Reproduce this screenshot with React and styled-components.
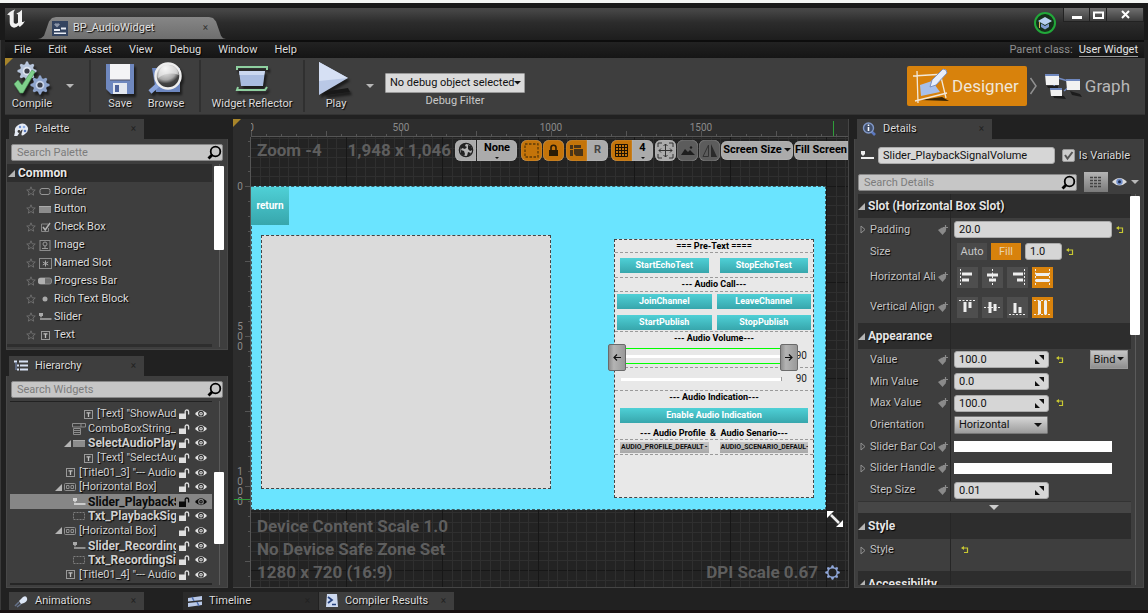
import React from "react";
import styled, { createGlobalStyle, css } from "styled-components";

const Global = createGlobalStyle`
  *, *::before, *::after { box-sizing: border-box; }
  html, body { margin: 0; background: #f4f6f4; }
  body, button, input, select { font-family: Roboto, "Liberation Sans", sans-serif; font-size: 11px; line-height: 14px; color: #dcdcdc; }
  button { border: 0; padding: 0; margin: 0; background: none; cursor: pointer; }
  input, select { margin: 0; min-width: 0; }
  ul { margin: 0; padding: 0; list-style: none; }
  svg { display: block; flex: none; }
`;

const panel = "#3e3e3e";
const label = css`text-shadow: 1px 1px 1px #000;`;

/* ---------- window frame ---------- */
const Window = styled.div`
  height: 100vh;
  min-height: 600px;
  display: flex;
  flex-direction: column;
  overflow: hidden;
  background: #212121;
  border-top: 3px solid #f4f6f4;
  box-shadow: inset 1px 0 #3a3a3a;
`;
const TitleBar = styled.header`
  height: 37px;
  flex: none;
  display: flex;
  align-items: flex-start;
  padding-left: 2px;
  border: solid #1a1a1a;
  border-width: 5px 4px 0 5px;
  background: linear-gradient(#4a4a4a, #2c2c2c 45%, #1d1d1d);
`;
const Logo = styled.div`width: 31px; padding-top: 1px;`;
const DocTab = styled.button`
  width: 188px;
  height: 22px;
  margin-top: 9px;
  padding: 0 18px 0 14px;
  display: flex;
  align-items: center;
  gap: 5px;
  color: #e2e2e2;
  background: linear-gradient(#868686, #6e6e6e);
  clip-path: polygon(0 100%, 3px 97%, 6px 85%, 11px 20%, 14px 5%, 18px 0, 171px 0, 175px 5%, 178px 20%, 183px 85%, 185px 97%, 100% 100%);
  ${label}
`;
const Close = styled.span`
  margin-left: auto;
  font-size: 10px;
  color: ${(p) => (p.$dim ? "#222" : "#333")};
  text-shadow: none;
`;
const TitleRight = styled.div`margin-left: auto; display: flex; gap: 7px;`;
const Tutorial = styled.button`
  width: 22px; height: 22px; margin-top: 4px; border-radius: 50%;
  border: 2px solid #22a83a; background: #16301b; display: grid; place-items: center;
`;
const WinButtons = styled.div`
  display: flex; gap: 1px; height: 14px; background: #222; border: 1px solid #222; border-top: 0;
`;
const WinButton = styled.button`
  width: ${(p) => p.$w}px; display: grid; place-items: center;
  background: linear-gradient(#707070, #3c3c3c);
`;
const MenuBar = styled.nav`
  height: 18px; flex: none; display: flex; align-items: center;
  margin: 0 4px 0 5px; padding: 0 6px 0 1px;
  border-top: 2px solid #0d0d0d;
  background: linear-gradient(#222, #151515);
`;
const MenuItem = styled.button`padding: 0 9px 0 8px; ${label}`;
const Parent = styled.div`
  margin-left: auto; color: #8f8f8f; display: flex; gap: 6px;
  a { color: #e4e4e4; text-decoration: none; border-bottom: 1px solid #999; line-height: 13px; }
`;

/* ---------- main toolbar ---------- */
const Toolbar = styled.div`
  height: 57px; flex: none; display: flex; margin: 0 3px 0 5px; padding-right: 15px;
  background: ${panel}; position: relative; border-bottom: 1px solid #333;
`;
const Corner = styled.i`
  position: absolute; left: 0; top: 0;
  border-top: 8px solid #a8852a; border-right: 8px solid transparent;
`;
const Tool = styled.button`
  width: ${(p) => p.$w}px; display: flex; flex-direction: column; align-items: center;
  padding-top: 3px; gap: 1px; white-space: nowrap; ${label}
  svg { filter: drop-shadow(2px 3px 1px rgba(0,0,0,.55)); }
`;
const Drop = styled.button`width: 22px; display: grid; place-items: center;`;
const Sep = styled.i`width: 2px; margin: 2px 8px; background: #303030;`;
const DebugBox = styled.div`
  width: 140px; margin-left: 4px; padding-top: 15px; display: flex; flex-direction: column;
  align-items: center; gap: 1px; color: #c8c8c8;
`;
const SelectWrap = styled.div`
  position: relative; width: ${(p) => (p.$w ? p.$w + "px" : "100%")};
  select {
    appearance: none; width: 100%; height: ${(p) => p.$h}px; padding: 0 4px;
    border: 1px solid ${(p) => (p.$grad ? "#777" : "#999")}; border-radius: 1px;
    color: #111; background: ${(p) => (p.$grad ? "linear-gradient(#d6d6d6, #9c9c9c)" : "#dadada")};
  }
  svg { position: absolute; right: ${(p) => (p.$grad ? 6 : 4)}px; top: 50%; margin-top: -2px; pointer-events: none; }
`;
const Modes = styled.div`margin-left: auto; display: flex; align-items: center; gap: 2px;`;
const Mode = styled.button`
  height: 40px; display: flex; align-items: center; gap: 3px; font-size: 17px; line-height: 22px;
  padding: 0 ${(p) => (p.$on ? 8 : 0)}px 0 ${(p) => (p.$on ? 5 : 4)}px; border-radius: 2px;
  color: ${(p) => (p.$on ? "#f0e6d8" : "#b8b8b8")};
  background: ${(p) => (p.$on ? "#d8820c" : "none")};
`;

/* ---------- work area ---------- */
const Work = styled.main`
  flex: 1; min-height: 0; display: grid; grid-template-columns: 222px minmax(0, 1fr) 290px;
  gap: 5px; padding: 4px 4px 0 6px;
`;
const Side = styled.section`display: flex; flex-direction: column; min-height: 0; min-width: 0;`;
const Tab = styled.button`
  width: 135px; height: ${(p) => p.$h || 20}px; flex: none; margin-left: ${(p) => p.$ml ?? 3}px;
  padding: 0 8px 0 5px; display: flex; align-items: center; gap: 6px; white-space: nowrap;
  background: ${(p) => (p.$dim ? "#2b2b2b" : panel)}; ${label}
`;
const TabIcon = styled.span`width: 15px; display: grid; place-items: center;`;
const Panel = styled.div`
  height: ${(p) => (p.$h ? p.$h + "px" : "auto")}; flex: ${(p) => (p.$h ? "none" : "1")};
  min-height: 0; margin-bottom: ${(p) => p.$mb || 0}px; padding: 5px 3px 2px;
  display: flex; flex-direction: column; overflow: hidden; background: ${panel};
  border: 1px solid #484848; border-top: 0;
`;
const SearchBox = styled.div`
  position: relative; flex: ${(p) => (p.$grow ? 1 : "none")};
  margin: 0 ${(p) => (p.$grow ? 0 : 1)}px;
  input {
    display: block; width: 100%; height: 17px; padding: 0 5px; border: 1px solid #888;
    border-radius: 2px; background: #c6c6c6; color: #222; outline: 0;
  }
  input::placeholder { color: #7c7c7c; opacity: 1; }
  svg { position: absolute; right: 1px; top: 1px; }
`;
const ScrollPane = styled.div`
  flex: 1; min-height: 0; margin-top: ${(p) => p.$mt}px; display: flex; gap: ${(p) => p.$gap ?? 2}px; overflow: hidden;
`;
const Track = styled.div`
  width: 10px; flex: none; padding-top: 1px;
  background: linear-gradient(90deg, transparent 5px, #5a5a5a 5px 6px, transparent 6px);
  &::before {
    content: ""; display: block; height: ${(p) => p.$size}px; margin-top: ${(p) => p.$at}px;
    background: #fff; border-radius: 1px;
  }
`;
const List = styled.div`flex: 1; min-width: 0; overflow: hidden;`;
const PalettePane = styled(ScrollPane)`margin-left: -3px;`;
const Group = styled.div`
  height: 18px; display: flex; align-items: center; gap: 3px; padding-left: 1px;
  font-weight: 700; font-size: 12px; color: #e8e8e8; background: #2e2e2e; ${label}
`;
const PaletteRow = styled.li`
  height: 18px; display: flex; align-items: center; gap: 2px; padding-left: 19px; ${label}
`;
const Glyph = styled.span`width: 14px; flex: none; display: grid; place-items: center;`;
const Tree = styled.ul`
  flex: 1; min-width: 0; margin-left: -2px; display: grid; grid-auto-rows: 1fr;
  padding: 5px 0 1px; border-top: 1px solid #222; border-bottom: 2px solid #262626;
`;
const TreeRow = styled.li`
  display: flex; align-items: center; padding-left: ${(p) => p.$pad}px; min-width: 0;
  color: ${(p) => (p.$on ? "#0a0a0a" : "#d0d0d0")};
  font-weight: ${(p) => (p.$bold ? 700 : 400)}; font-size: ${(p) => (p.$bold ? 12 : 11)}px;
  background: ${(p) => (p.$on ? "#868686" : "none")};
  text-shadow: ${(p) => (p.$on ? "none" : "1px 1px 1px #000")};
`;
const Arrow = styled.span`width: 10px; flex: none; display: grid; place-items: center;`;
const TreeText = styled.span`flex: 1; min-width: 0; margin: 0 3px 0 2px; overflow: hidden; white-space: nowrap;`;
const TreeTools = styled.span`
  width: 33px; flex: none; display: flex; justify-content: space-between; padding-right: 5px;
`;

/* ---------- designer canvas ---------- */
const gridStops = (dir, c) =>
  `linear-gradient(${dir}, #171717 0 1px, transparent 1px, ` +
  [10, 19, 29, 38, 48, 58, 67, 77, 86].map((n) => `transparent ${n}px, ${c} ${n}px ${n + 1}px, transparent ${n + 1}px`).join(", ") +
  `)`;
const Designer = styled.section`
  position: relative; display: grid; grid-template: 18px minmax(0, 1fr) / 18px minmax(0, 1fr);
  background: #2d2d2d; border: solid #454545; border-width: 0 1px 1px 0; overflow: hidden; min-width: 0;
`;
const RulerTop = styled.div`
  position: relative; grid-column: 2; display: flex; overflow: hidden; font-size: 10px; line-height: 18px; color: #8a8a8a;
  border-bottom: 1px solid #555;
  background:
    linear-gradient(90deg, #555 1px, transparent 1px) 0 100% / 75px 5px repeat-x,
    linear-gradient(90deg, #555 1px, transparent 1px) 0 100% / 15px 2px repeat-x;
  span { flex: none; width: 150px; text-align: center; }
  span:first-child { margin-left: -75px; }
`;
const RulerLeft = styled.div`
  position: relative; overflow: hidden; color: #8a8a8a; border-right: 1px solid #555;
  background:
    linear-gradient(#555 1px, transparent 1px) 100% 49px / 5px 75px repeat-y,
    linear-gradient(#555 1px, transparent 1px) 100% 4px / 2px 15px repeat-y;
  display: flex; flex-direction: column;
`;
const RulerNumber = styled.div`
  flex: none; height: 150px; width: 14px; display: flex; flex-direction: column; justify-content: center; align-items: center;
  font-size: 10px; line-height: 10px;
  &:first-child { margin-top: -25px; }
`;
const Mark = styled.i`
  position: absolute; background: #2f9e3a;
  ${(p) => (p.$v ? "right: 14px; top: 2px; width: 1px; height: 15px;" : "left: 1px; top: 362px; width: 16px; height: 1px;")}
`;
const Stage = styled.div`
  position: relative; overflow: hidden; background-color: #232323;
  background-image: ${gridStops("90deg", "#2f2f2f")}, ${gridStops("180deg", "#2f2f2f")};
  background-size: 96px 100%, 100% 96px; background-position: -1px 0, 0 49px;
`;
const HudTop = styled.div`
  position: absolute; left: 6px; right: 0; top: 2px; display: flex; align-items: center;
  font-size: 17px; line-height: 22px; font-weight: 700; color: #5e5e5e; white-space: nowrap;
`;
const HudTools = styled.div`
  display: flex; align-items: center; gap: 1px; margin-left: auto;
  button { flex: none; }
`;
const Pill = styled.button`
  height: ${(p) => p.$h || 21}px; width: ${(p) => p.$w || 21}px; display: flex; align-items: center; justify-content: center; gap: 2px;
  border-radius: ${(p) => (p.$side === "l" ? "6px 0 0 6px" : p.$side === "r" ? "0 6px 6px 0" : "6px")};
  background: ${(p) => (p.$c === "on" ? "#c4740a" : p.$c === "dim" ? "#5c5c5c" : "#ababab")};
  color: ${(p) => (p.$c === "soft" ? "#444" : "#000")}; font-weight: 700; white-space: nowrap; overflow: hidden;
  flex-direction: ${(p) => (p.$col ? "column" : "row")};
  box-shadow: inset 0 0 1px #ddd;
`;
const Pair = styled.span`display: flex; margin: 0 ${(p) => p.$m || 0}px; gap: ${(p) => (p.$split ? 1 : 0)}px;`;
const HudBottom = styled.div`
  position: absolute; left: 6px; right: 8px; bottom: 3px; display: flex; justify-content: space-between; align-items: flex-end;
  font-size: 17px; line-height: 23px; font-weight: 700; color: #5e5e5e;
  div { display: flex; flex-direction: column; }
  p { margin: 0; display: flex; align-items: center; gap: 7px; }
`;
const Surface = styled.div`
  position: absolute; left: 0; top: 49px; width: 575px; height: 324px; background: #6ae4ff;
  outline: 1px dashed #3a5a60; outline-offset: -1px;
`;
const teal = "linear-gradient(#4fd0d6, #37a6ac)";
const ReturnButton = styled.button`
  position: absolute; left: 0; top: 1px; width: 38px; height: 38px; background: ${teal};
  color: #fff; font-weight: 700; font-size: 10px;
`;
const VideoView = styled.div`
  position: absolute; left: 10px; top: 49px; width: 290px; height: 254px; background: #dbdbdb; border: 1px dashed #444;
`;
const Form = styled.div`
  position: absolute; left: 363px; top: 53px; width: 200px; height: 259px; background: #e8e8e8;
  border: 1px dashed #444; color: #000; display: flex; flex-direction: column;
`;
const FormTitle = styled.div`
  height: ${(p) => p.$h}px; flex: none; text-align: center; font-weight: 700; font-size: 9px; line-height: 12px;
  white-space: pre;
`;
const FormRow = styled.div`
  flex: none; height: ${(p) => p.$h}px; display: grid; grid-template-columns: ${(p) => (p.$one ? "1fr" : "1fr 1fr")};
  gap: 6px ${(p) => p.$gap}px; padding: 0 ${(p) => p.$px}px; align-content: center;
  border: dashed #9a9a9a; border-width: ${(p) => (p.$bare ? 0 : 1)}px 0;
`;
const FormButton = styled.button`
  height: 15px; background: ${teal}; color: #fff; font-weight: 700; font-size: 9px; line-height: 15px;
`;
const FormSelect = styled.button`
  height: 11px; padding: 0 1px; display: flex; justify-content: space-between; overflow: hidden; white-space: nowrap;
  background: linear-gradient(#c6c6c6, #a8a8a8); color: #111; font-size: 7px; line-height: 11px; font-weight: 700;
`;
const VolumeRow = styled.div`
  height: 23px; flex: none; display: flex; align-items: center; padding: 0 6px; gap: 14px; font-size: 10px;
  border-bottom: 1px dashed #9a9a9a;
  span { color: #222; }
`;
const selectedEdges = css`
  linear-gradient(#00ff00, #00ff00) top / 100% 1px no-repeat,
  linear-gradient(#00ff00, #00ff00) bottom / 100% 1px no-repeat,
`;
const Volume = styled.input`
  appearance: none; flex: 1; height: 16px;
  background: ${(p) => p.$on && selectedEdges} linear-gradient(#fff, #fff) center / 100% 3px no-repeat;
  &::-webkit-slider-thumb { appearance: none; width: 1px; height: 4px; background: #999; }
`;
const Nudge = styled.button`
  position: absolute; top: 158px; left: ${(p) => p.$x}px; width: 18px; height: 27px; display: grid; place-items: center;
  background: linear-gradient(90deg, #8e8e8e, #b4b4b4 30%, #999); border: 1px solid #6a6a6a; border-radius: 2px;
`;
const ResizeGrip = styled.div`position: absolute; left: 576px; top: 374px;`;

/* ---------- details ---------- */
const NameRow = styled.div`display: flex; align-items: center; gap: 4px; padding: 3px 10px 8px 2px;`;
const Field = styled.input`
  width: ${(p) => (p.$w ? p.$w + "px" : "100%")}; flex: ${(p) => (p.$grow ? 1 : "none")}; height: 17px; padding: 0 4px; border: 1px solid #aaa; border-radius: 3px;
  background: #d6d6d6; color: #111; outline: 0;
`;
const Check = styled.label`
  display: flex; align-items: center; gap: 4px; margin-left: 3px; ${label}
  input {
    appearance: none; width: 13px; height: 13px; border-radius: 2px; border: 1px solid #999; background: #ccc;
  }
  span { position: relative; display: grid; }
  svg { position: absolute; left: 1px; top: 1px; pointer-events: none; }
`;
const FilterRow = styled.div`display: flex; align-items: center; height: 20px; flex: none; padding-right: 1px;`;
const ViewButton = styled.button`
  width: 24px; height: 20px; margin: 0 4px 0 7px; display: grid; place-items: center; background: linear-gradient(#b4b4b4, #7a7a7a);
`;
const EyeButton = styled.button`display: flex; align-items: center; gap: 4px;`;
const Details = styled.div`
  flex: 1; min-width: 0; overflow: hidden; margin-left: -2px; margin-right: -1px;
`;
const Divided = css`
  background-image: linear-gradient(90deg, transparent 94px, #262626 94px 95px, transparent 95px);
`;
const DividedBlock = styled.div`padding-bottom: ${(p) => p.$pb}px; ${Divided}`;
const Category = styled.div`
  height: ${(p) => p.$h}px; display: flex; align-items: center; gap: 3px; padding-left: 2px; font-size: 12px; font-weight: 700;
  color: #e4e4e4; background-color: #2d2d2d; ${Divided} ${label}
`;
const Props = styled.div`
  display: grid; grid-auto-rows: 1fr; height: 152px; ${Divided}
`;
const Prop = styled.div`
  display: flex; align-items: center; min-height: 0; ${(p) => p.$h && `height: ${p.$h}px;`}
`;
const Caret = styled.span`width: 14px; flex: none; padding-left: 4px;`;
const PropName = styled.label`
  width: 65px; flex: none; overflow: hidden; white-space: nowrap; color: #c4c4c4; ${label}
`;
const Pin = styled.span`width: 10px; flex: none; margin: 0 6px 0 3px;`;
const Spin = styled.span`
  position: relative; width: 95px; display: block;
  svg { position: absolute; right: 5px; top: 4px; }
`;
const Reset = styled.button`margin-left: ${(p) => p.$ml ?? 7}px;`;
const Bind = styled.button`
  width: 38px; height: 19px; margin-left: auto; margin-right: 3px; display: flex; align-items: center; justify-content: center; gap: 2px;
  background: linear-gradient(#c6c6c6, #8e8e8e); border: 1px solid #999; color: #111;
`;
const SegPad = styled.span`display: flex; gap: 4px; padding: 0 4px 0 3px;`;
const Seg = styled.button`
  width: 30px; height: 17px; background: ${(p) => (p.$on ? "#d8820c" : "#4a4a4a")}; color: ${(p) => (p.$on ? "#e8d4b0" : "#c8c8c8")};
`;
const Align = styled.button`
  width: 21px; height: 21px; display: grid; place-items: center; background: ${(p) => (p.$on ? "#d8820c" : "#4e4e4e")};
`;
const Swatch = styled.button`width: 158px; height: 11px; background: #fff;`;
const MoreBar = styled.button`
  width: 100%; height: 12px; display: grid; place-items: center; background: #464646; border-top: 1px solid #333;
`;

const Footer = styled.footer`height: 25px; flex: none; display: flex; align-items: flex-start; padding: 4px 4px 0 7px; border-bottom: 3px solid #1a1213;`;
const Gap = styled.i`width: 37px;`;

/* ---------- drawings ---------- */
const Svg = ({ w, h, children, ...r }) => (
  <svg width={w} height={h} viewBox={`0 0 ${w} ${h}`} fill="none" {...r}>{children}</svg>
);
const Tri = ({ c = "#b8b8b8", w = 8 }) => <Svg w={w} h={w > 5 ? 5 : 2}><path d={`M0 0H${w}L${w / 2} ${w / 2}Z`} fill={c} /></Svg>;
const Open = () => <Svg w={7} h={7}><path d="M7 0V7H0Z" fill="#b4b4b4" /></Svg>;
const Lens = () => (
  <Svg w={15} h={15}><circle cx="8.500" cy="6.500" r="4.800" stroke="#000" strokeWidth="1.800" /><path d="M5.500 9.500L1.500 13.500" stroke="#000" strokeWidth="2.800" /></Svg>
);
const Eye = ({ c = "#e4e4e4", p = "#2a2a2a" }) => (
  <Svg w={12} h={10}><path d="M0 5Q6-2.500 12 5Q6 11.500 0 5Z" fill={c} /><circle cx="6" cy="4.700" r="2.300" stroke={p} strokeWidth="1.100" fill={c} /><circle cx="6" cy="4.700" r=".7" fill={p} /></Svg>
);
const Unlock = ({ c = "#e0e0e0" }) => (
  <Svg w={11} h={10}><path d="M0 4.500H7V10H0Z" fill={c} /><path d="M6.200 5V2.500Q6.200 1 7.900 1T9.600 2.500V5.500" stroke={c} strokeWidth="1.300" /></Svg>
);
const Star = () => <Svg w={10} h={10}><path d="M5 .8L6.200 3.800 9.300 4 6.900 6 7.700 9.200 5 7.500 2.300 9.200 3.100 6 .7 4 3.800 3.800Z" stroke="#777" strokeWidth=".8" /></Svg>;
const ResetArrow = () => <Svg w={8} h={8}><path d="M1.500 2H6.500V6.500H3" stroke="#c8c832" strokeWidth="1.200" /><path d="M0 2L3 0V4Z" fill="#c8c832" /></Svg>;
const PinIcon = () => <Svg w={10} h={10}><path d="M0 5L4 2.500 7 3 8 6 4.500 10Z" fill="#8a8a8a" /><path d="M7.500 0V5M5 2.500H10" stroke="#8a8a8a" strokeWidth="1.200" /></Svg>;
const SpinIcon = () => <Svg w={9} h={9}><path d="M4 0H9V5ZM0 4V9H5Z" fill="#111" /></Svg>;

const glyphs = {
  border: <Svg w={12} h={9}><rect x="1" y="1.500" width="10" height="6" rx="2" stroke="#969696" /></Svg>,
  button: <Svg w={12} h={9}><rect x="0" y="1" width="12" height="7" fill="#8c8c8c" /><path d="M0 1.500H12" stroke="#aaa" /></Svg>,
  check: <Svg w={11} h={11}><path d="M8 2H1.500V9.500H8.500V6" stroke="#888" /><path d="M3 5L5.200 8L10 1" stroke="#b4b4b4" strokeWidth="1.500" /></Svg>,
  image: <Svg w={12} h={11}><rect x="1" y=".5" width="10" height="10" stroke="#8c8c8c" /><circle cx="6" cy="4" r="2" stroke="#999" /><path d="M6 6V9M3 8.500H9" stroke="#999" /></Svg>,
  slot: <Svg w={13} h={11}><rect x=".5" y=".5" width="12" height="10" stroke="#8c8c8c" /><path d="M6.500 2.500V8.500M3.800 4L9.200 7M9.200 4L3.800 7" stroke="#aaa" /></Svg>,
  progress: <Svg w={14} h={8}><rect x=".5" y="1" width="13" height="6" rx="2" fill="#6e6e6e" stroke="#8c8c8c" /><path d="M2 1H7V7H2Q0 7 0 4T2 1Z" fill="#b0b0b0" /></Svg>,
  rich: <Svg w={8} h={8}><circle cx="4" cy="4" r="2.500" fill="#aaa" /></Svg>,
  slider: <Svg w={13} h={8}><path d="M0 0H4V3H3L2 5L1 3H0Z" fill="#aaa" /><path d="M1 6H12.500" stroke="#999" strokeWidth="1.800" /></Svg>,
  sliderOn: <Svg w={13} h={8}><path d="M0 0H4V3H3L2 5L1 3H0Z" fill="#d4d4d4" /><path d="M1 6H12.500" stroke="#d4d4d4" strokeWidth="1.800" /></Svg>,
  text: <Svg w={9} h={9}><rect x=".5" y=".5" width="8" height="8" stroke="#999" /><path d="M2.500 2.800H6.500M4.500 2.500V7" stroke="#c0c0c0" strokeWidth="1.300" /></Svg>,
  combo: <Svg w={14} h={12}><path d="M.5 .5H13.500V4H.5ZM9 .5V4" stroke="#8c8c8c" /><path d="M1.500 5.500H8.500V11.500H1.500ZM2 7.500H8M2 9.500H8" stroke="#8c8c8c" /></Svg>,
  hbox: <Svg w={12} h={8}><rect x=".5" y=".5" width="11" height="7" rx="1" stroke="#909090" /><path d="M2.500 2.500H5V5.500H2.500ZM7 2.500H9.500V5.500H7Z" stroke="#909090" /></Svg>,
  dashed: <Svg w={12} h={8}><rect x=".5" y=".5" width="11" height="7" stroke="#7c7c7c" strokeDasharray="2 1" /></Svg>,
};

const gearPath = (cx, cy, r, n = 8) => {
  let d = "";
  for (let i = 0; i < n * 4; i++) {
    const a = ((i - 0.5) / (n * 4)) * Math.PI * 2;
    const k = i % 4 < 2 ? r : r * 0.74;
    d += `${i ? "L" : "M"}${(cx + Math.cos(a) * k).toFixed(1)} ${(cy + Math.sin(a) * k).toFixed(1)}`;
  }
  return d + "Z";
};

const UnrealLogo = () => (
  <Svg w={19} h={20}>
    <path fill="#f2f2f2" d="M0 6Q2.500 2 8 .5L6.700 3V13.500Q8.500 16 11 13.600V5.500L9.400 4.500Q12.500 3.600 15 .8V12.800Q16.200 13.800 18 11.700Q16.500 15.500 12.800 18L11.400 16.600Q9.500 19 6.200 18.600Q2.500 17 2.700 13V6.400Q1.300 5.500 0 6Z" />
  </Svg>
);
const WidgetDoc = () => (
  <Svg w={16} h={15}><rect width="16" height="15" fill="#33435f" /><path d="M2 3.500L4 2 5 3 6 2 8 3.500 5 6.500Z" fill="#8b95a8" /><path d="M2 8H8V10H2ZM9 6.500H14V8.500H9ZM2 11.500H14V13H2Z" fill="#e8ecf4" /></Svg>
);
const CompileIcon = () => (
  <Svg w={36} h={35}>
    <path d={gearPath(13, 10, 9.5)} fill="#b8c6dc" /><circle cx="13" cy="10" r="4.300" fill="#dfe6f2" /><circle cx="13" cy="10" r="2.600" fill="#3a3e48" />
    <path d={gearPath(26, 24, 9.5)} fill="#8ea4cc" /><circle cx="26" cy="24" r="4.300" fill="#c8d4ea" /><circle cx="26" cy="24" r="2.600" fill="#3a3e48" />
    <path d="M0 23L4 19L8 24L18 9L21 11L9 32H6Z" fill="#7fd08c" stroke="#4a9a58" strokeWidth=".6" />
  </Svg>
);
const SaveIcon = () => (
  <Svg w={30} h={35}><path d="M1 3H29V33H6L1 28Z" fill="#6f88bf" /><path d="M5 3H25V19H5Z" fill="#f4f4f6" /><path d="M5 19H25" stroke="#556" /><path d="M8 22H22V33H8Z" fill="#e4e8f0" /><path d="M10 24H14V31H10Z" fill="#4e629a" /></Svg>
);
const BrowseIcon = () => (
  <Svg w={36} h={35}>
    <defs><radialGradient id="lens" cx=".4" cy=".2" r="1"><stop offset="0" stopColor="#fff" /><stop offset=".45" stopColor="#a8a8a8" /><stop offset=".6" stopColor="#444" /><stop offset="1" stopColor="#222" /></radialGradient></defs>
    <path d="M4 7H32V31H8Z" fill="#6d87c0" /><path d="M12 22L2 31" stroke="#8aa4dc" strokeWidth="4.500" />
    <circle cx="20" cy="15" r="12.500" fill="url(#lens)" stroke="#eee" strokeWidth="2.500" /><path d="M10 17Q20 10 31 14Q29 4 20 4T10 17Z" fill="#f0f0f0" opacity=".6" />
  </Svg>
);
const ReflectIcon = () => (
  <Svg w={36} h={35}><path d="M5 10H31L29 25H7Z" fill="#a9bce0" /><path d="M5 10H31L30 14H5.500Z" fill="#cbd8f0" /><path d="M3 9V6H33V9M4 26L3 29H31L33 26" stroke="#8fd0a0" strokeWidth="2" /></Svg>
);
const PlayIcon = () => (
  <Svg w={36} h={35}><path d="M4 31L30 27 32 31 8 34Z" fill="#181818" /><path d="M1 1L30 17L1 34Z" fill="#b9c8e6" /><path d="M1 1L30 17L1 20Z" fill="#d6e0f4" /></Svg>
);
const DesignerIcon = () => (
  <Svg w={37} h={36}>
    <path d="M8 32L30 29 37 33Z" fill="#3a2503" /><path d="M1 8L33 6M3 33L35 25M5 3L6 35M28 5L34 30" stroke="#f2e8d8" strokeWidth="1.300" />
    <path d="M8 17L20 13 28 24 9 28Z" fill="#a8c0ea" /><path d="M18 19L20 12L31 1Q35 1 35 5L24 17Z" fill="#e8eefa" stroke="#7d92c0" />
  </Svg>
);
const GraphIcon = () => (
  <Svg w={38} h={26}>
    <path d="M14 5L24 8M10 12L12 18M20 18L26 13" stroke="#7189c0" strokeWidth="1.500" />
    <path d="M3 13H14V15H4ZM8 20L20 23 22 26 10 25ZM26 18L36 21 38 24 28 22Z" fill="#1c1c1c" />
    <path d="M1 1H15V12H2ZM22 6H36V17H23ZM6 15H18V23H7Z" fill="#f2f2f2" /><path d="M1 1H15V3H1ZM22 6H36V8H22ZM6 15H18V17H6Z" fill="#6f88bf" />
  </Svg>
);
const PaletteIcon = () => (
  <Svg w={15} h={13}><path d="M1 9Q0 4 5 1.500T13 3 11 11 8 9 4 12 1 9Z" fill="#e6ebf4" /><circle cx="5" cy="8.500" r="1.400" fill="#3a3a3a" /><circle cx="6" cy="4" r="1.200" fill="#6d8fd0" /><circle cx="10" cy="4" r="1.300" fill="#8fb0e8" /><circle cx="11" cy="8" r="1.300" fill="#5d7cc0" /></Svg>
);
const HierarchyIcon = () => (
  <Svg w={15} h={12}><path d="M0 1.500H3M5 1.500H14M3 5.500H5M6 5.500H14M6 9.500H14M3 9.500H5" stroke="#d8e2f4" strokeWidth="2" /><path d="M2 2V10" stroke="#7d92c0" /></Svg>
);
const DetailsIcon = () => (
  <Svg w={15} h={14}><path d="M9 9L13 13" stroke="#5b78c0" strokeWidth="2.600" /><circle cx="6.500" cy="6" r="5" fill="#42506c" stroke="#8098c8" strokeWidth="1.400" /><path d="M6.500 5V9M6.500 2.500V4" stroke="#fff" strokeWidth="1.600" /></Svg>
);
const AnimIcon = () => <Svg w={15} h={13}><path d="M1 11L5 7M3 12L7 9" stroke="#66738c" strokeWidth="1.500" /><path d="M5 6L9 2Q12 0 13 3T10 8L7 9Z" fill="#dce6f6" /></Svg>;
const TimelineIcon = () => <Svg w={15} h={11}><path d="M0 2L14 0V4L0 5.500ZM0 7L14 5.500V9L0 11Z" fill="#b9c9e8" /><path d="M4 1L6 5M9 6L11 10" stroke="#5270b0" strokeWidth="1.500" /></Svg>;
const CompilerIcon = () => <Svg w={14} h={14}><path d="M2 0H12L13 13H1Z" fill="#cdd9f0" /><path d="M3 3L7 6 3 9M7 10.500H11" stroke="#24407c" strokeWidth="1.700" /></Svg>;
const Globe = () => (
  <Svg w={16} h={16}><circle cx="8" cy="8" r="6.700" fill="#b4b4b4" stroke="#222" strokeWidth="1.200" /><path d="M2 4Q5 1 8 1.500L7 4 9 5 7 7 4 6 3 8 6 9 7 12 6 14 3 12ZM10 3L13 4 14.500 8 12 9 10 7ZM10 10L13 11 11 14H9Z" fill="#222" /></Svg>
);
const SettingsGear = () => (
  <Svg w={15} h={15}><path d={gearPath(7.5, 7.5, 7.3)} fill="#8fa6d8" /><circle cx="7.500" cy="7.500" r="4" fill="#232323" /></Svg>
);

const alignIcons = {
  hl: <><path d="M1.500 0V17" strokeDasharray="2 1.500" /><path d="M3 5H13M3 11H10" strokeWidth="3" /></>,
  hc: <><path d="M8.500 0V17" strokeDasharray="2 1.500" /><path d="M3 6H14M5 11H12" strokeWidth="3" /></>,
  hr: <><path d="M15.500 0V17" strokeDasharray="2 1.500" /><path d="M4 5H14M8 11H14" strokeWidth="3" /></>,
  hf: <><path d="M1.500 0V17M15.500 0V17" strokeDasharray="2 1.500" /><path d="M2 5.500H15M2 11.500H15" strokeWidth="3" /></>,
  vt: <><path d="M0 1.500H17" strokeDasharray="2 1.500" /><path d="M6 3V13M11 3V9" strokeWidth="3" /></>,
  vc: <><path d="M0 8.500H17" strokeDasharray="2 1.500" /><path d="M6 3V14M11 5V12" strokeWidth="3" /></>,
  vb: <><path d="M0 15.500H17" strokeDasharray="2 1.500" /><path d="M6 4V14M11 8V14" strokeWidth="3" /></>,
  vf: <><path d="M0 1.500H17M0 15.500H17" strokeDasharray="2 1.500" /><path d="M5.500 2V15M11.500 2V15" strokeWidth="3" /></>,
};
const AlignButtons = ({ ids, name }) => ids.map((id, i) => (
  <Align key={id} $on={i === 3} aria-label={`${name} ${i + 1}`}><Svg w={17} h={17} stroke="#eee">{alignIcons[id]}</Svg></Align>
));

const palette = [["border", "Border"], ["button", "Button"], ["check", "Check Box"], ["image", "Image"], ["slot", "Named Slot"], ["progress", "Progress Bar"], ["rich", "Rich Text Block"], ["slider", "Slider"], ["text", "Text"]];
const tree = [
  { pad: 63, g: "text", t: '[Text] "ShowAudioInfo"' },
  { pad: 54, g: "combo", t: "ComboBoxString_112" },
  { pad: 54, g: "button", t: "SelectAudioPlaylist", bold: true, open: true },
  { pad: 63, g: "text", t: '[Text] "SelectAudio"' },
  { pad: 45, g: "text", t: '[Title01_3] "--- Audio Volume' },
  { pad: 45, g: "hbox", t: "[Horizontal Box]", open: true },
  { pad: 54, g: "sliderOn", t: "Slider_PlaybackSignalVolume", bold: true, on: true },
  { pad: 54, g: "dashed", t: "Txt_PlaybackSignal", bold: true },
  { pad: 45, g: "hbox", t: "[Horizontal Box]", open: true },
  { pad: 54, g: "slider", t: "Slider_RecordingSignal", bold: true },
  { pad: 54, g: "dashed", t: "Txt_RecordingSignal", bold: true },
  { pad: 45, g: "text", t: '[Title01_4] "--- Audio Indication' },
];

const PanelTab = ({ icon, children, ...r }) => (
  <Tab {...r}><TabIcon>{icon}</TabIcon>{children}<Close $dim>×</Close></Tab>
);
const Search = ({ text, grow }) => (
  <SearchBox $grow={grow}><input type="text" placeholder={text} aria-label={text} /><Lens /></SearchBox>
);
const PropRow = ({ name, id, caret, pin = true, h, children }) => (
  <Prop $h={h}>
    <Caret>{caret && <Svg w={6} h={9}><path d="M1 1L5 4.500 1 8Z" stroke="#909090" /></Svg>}</Caret>
    <PropName htmlFor={id}>{name}</PropName>
    <Pin>{pin && <PinIcon />}</Pin>
    {children}
  </Prop>
);
const SpinField = ({ id, value }) => <Spin><Field id={id} defaultValue={value} /><SpinIcon /></Spin>;
const ResetButton = ({ ml }) => <Reset $ml={ml} aria-label="Reset to default"><ResetArrow /></Reset>;

function LeftSide() {
  return (
    <Side>
      <PanelTab icon={<PaletteIcon />}>Palette</PanelTab>
      <Panel $h={211} $mb={6}>
        <Search text="Search Palette" />
        <PalettePane $mt={3}>
          <List>
            <Group><Open />Common</Group>
            <ul>{palette.map(([g, t]) => <PaletteRow key={g}><Star /><Glyph>{glyphs[g]}</Glyph>{t}</PaletteRow>)}</ul>
            <Group><Open />Editor</Group>
          </List>
          <Track $size={84} $at={1} />
        </PalettePane>
      </Panel>
      <PanelTab icon={<HierarchyIcon />}>Hierarchy</PanelTab>
      <Panel>
        <Search text="Search Widgets" />
        <ScrollPane $mt={3}>
          <Tree>
            {tree.map((n, i) => {
              const c = n.on ? "#0a0a0a" : undefined;
              return (
                <TreeRow key={i} $pad={n.pad} $bold={n.bold} $on={n.on}>
                  <Arrow>{n.open && <Open />}</Arrow><Glyph>{glyphs[n.g]}</Glyph><TreeText>{n.t}</TreeText>
                  <TreeTools><Unlock c={c} /><Eye c={c} p={n.on ? "#868686" : undefined} /></TreeTools>
                </TreeRow>
              );
            })}
          </Tree>
          <Track $size={72} $at={70} />
        </ScrollPane>
      </Panel>
    </Side>
  );
}

function Canvas() {
  return (
    <Designer>
      <Corner />
      <RulerTop><span>0</span><span>500</span><span>1000</span><span>1500</span><Mark $v /></RulerTop>
      <RulerLeft>
        {["0", "500", "1000"].map((n) => <RulerNumber key={n}>{n.split("").map((d, i) => <span key={i}>{d}</span>)}</RulerNumber>)}
        <Mark />
      </RulerLeft>
      <Stage>
        <Surface>
          <ReturnButton>return</ReturnButton>
          <VideoView />
          <Form>
            <FormTitle $h={12}>=== Pre-Text ====</FormTitle>
            <FormRow $h={26} $gap={11} $px={5}><FormButton>StartEchoTest</FormButton><FormButton>StopEchoTest</FormButton></FormRow>
            <FormTitle $h={13}>--- Audio Call---</FormTitle>
            <FormRow $h={41} $gap={5} $px={2}>
              <FormButton>JoinChannel</FormButton><FormButton>LeaveChannel</FormButton>
              <FormButton>StartPublish</FormButton><FormButton>StopPublish</FormButton>
            </FormRow>
            <FormTitle $h={13}>--- Audio Volume---</FormTitle>
            <VolumeRow><Volume $on type="range" defaultValue={100} aria-label="Playback volume" /><span>90</span></VolumeRow>
            <VolumeRow><Volume type="range" defaultValue={100} aria-label="Recording volume" /><span>90</span></VolumeRow>
            <FormTitle $h={12}>--- Audio Indication---</FormTitle>
            <FormRow $h={24} $gap={0} $px={5} $one $bare><FormButton>Enable Audio Indication</FormButton></FormRow>
            <FormTitle $h={12}>{"--- Audio Profile  &  Audio Senario---"}</FormTitle>
            <FormRow $h={16} $gap={11} $px={5}>
              <FormSelect><span>AUDIO_PROFILE_DEFAULT</span><span>-</span></FormSelect>
              <FormSelect><span>AUDIO_SCENARIO_DEFAUL-</span></FormSelect>
            </FormRow>
          </Form>
          <Nudge $x={357} aria-label="Move left"><Svg w={8} h={7}><path d="M8 3.500H1M4 .5L1 3.500 4 6.500" stroke="#111" strokeWidth="1.200" /></Svg></Nudge>
          <Nudge $x={529} aria-label="Move right"><Svg w={8} h={7}><path d="M0 3.500H7M4 .5L7 3.500 4 6.500" stroke="#111" strokeWidth="1.200" /></Svg></Nudge>
        </Surface>
        <ResizeGrip><Svg w={16} h={16}><path d="M4 4L12 12" stroke="#eee" strokeWidth="2.500" /><path d="M0 0H7L0 7ZM16 16H9L16 9Z" fill="#fff" /></Svg></ResizeGrip>
        <HudTop>
          <span>Zoom -4</span>
          <HudTools>
            <span>1,948 x 1,046</span>
            <Pair $split $m={3}>
              <Pill $side="l" aria-label="Culture"><Globe /></Pill>
              <Pill $side="r" $w={40} $col>None<Tri c="#111" w={4} /></Pill>
            </Pair>
            <Pill $c="on" aria-label="Outlines"><Svg w={15} h={15}><rect x="1" y="1" width="13" height="13" stroke="#5c3a08" strokeDasharray="2.5 1.5" strokeWidth="1.300" /></Svg></Pill>
            <Pill $c="on" aria-label="Respect locks"><Svg w={11} h={13}><path d="M1 6H10V12H1Z" fill="#2a1c06" /><path d="M3 6V3.500Q3 1.200 5.500 1.200T8 3.500V6" stroke="#2a1c06" strokeWidth="1.600" /></Svg></Pill>
            <Pair $m={1}>
              <Pill $side="l" $c="on" aria-label="Layout"><Svg w={14} h={13}><path d="M0 1H3V5H0ZM0 6H3V12H0ZM4 1H11V4H4ZM4 5H13V12H6L4 10Z" fill="#4a3418" /></Svg></Pill>
              <Pill $side="r" $c="soft">R</Pill>
            </Pair>
            <Pair $m={1}>
              <Pill $side="l" $c="on" aria-label="Grid snap"><Svg w={13} h={13}><path d="M.5 .5H12.500V12.500H.5ZM3.500 0V13M6.500 0V13M9.500 0V13M0 3.500H13M0 6.500H13M0 9.500H13" stroke="#1c1204" /></Svg></Pill>
              <Pill $side="r" $col>4<Tri c="#111" w={4} /></Pill>
            </Pair>
            <Pill aria-label="Zoom to fit"><Svg w={17} h={17} stroke="#333"><path d="M1 5V1H5M12 1H16V5M16 12V16H12M5 16H1V12M8.500 2V15M2 8.500H15M6.500 4L8.500 2 10.500 4M6.500 13L8.500 15 10.500 13M4 6.500L2 8.500 4 10.500M13 6.500L15 8.500 13 10.500" /></Svg></Pill>
            <Pill $c="dim" aria-label="Preview background"><Svg w={14} h={11}><path d="M0 10L4 4 7 7 9 5 14 10Z" fill="#1e1e1e" /><circle cx="10" cy="2.500" r="1.200" fill="#1e1e1e" /></Svg></Pill>
            <Pill $c="dim" aria-label="Flip layout"><Svg w={15} h={13}><path d="M6.500 1V12.500H1Z" stroke="#333" /><path d="M9 0V13H15Z" fill="#2a2a2a" /></Svg></Pill>
            <Pill $w={72} $h={19}>Screen Size<Tri c="#111" w={7} /></Pill>
            <Pill $w={54} $h={19} $side="l">Fill Screen</Pill>
          </HudTools>
        </HudTop>
        <HudBottom>
          <div><span>Device Content Scale 1.0</span><span>No Device Safe Zone Set</span><span>1280 x 720 (16:9)</span></div>
          <p>DPI Scale 0.67 <SettingsGear /></p>
        </HudBottom>
      </Stage>
    </Designer>
  );
}

function DetailsPanel() {
  return (
    <Side>
      <PanelTab icon={<DetailsIcon />}>Details</PanelTab>
      <Panel>
        <NameRow>
          <Svg w={14} h={9}><path d="M1 0H5V3L3 5 1 3Z" fill="#eee" /><path d="M1 7H14" stroke="#eee" strokeWidth="2" /></Svg>
          <Field $grow defaultValue="Slider_PlaybackSignalVolume" aria-label="Widget name" />
          <Check><span><input type="checkbox" defaultChecked /><Svg w={11} h={11}><path d="M2 5L4.500 8.500 9.500 2" stroke="#555" strokeWidth="2" /></Svg></span>Is Variable</Check>
        </NameRow>
        <FilterRow>
          <Search text="Search Details" grow />
          <ViewButton aria-label="Property matrix"><Svg w={12} h={13}><path d="M0 1.500H12M0 4.500H12M0 7.500H12M0 10.500H12" stroke="#444" strokeWidth="1.600" strokeDasharray="3 1" /></Svg></ViewButton>
          <EyeButton aria-label="View options"><Svg w={15} h={10}><path d="M0 5Q7.500-3 15 5Q7.500 12 0 5Z" fill="#dcdcdc" /><circle cx="7.500" cy="4.800" r="3.200" fill="#6f8cc8" /><circle cx="7.500" cy="4.800" r="1.500" fill="#1c2c50" /></Svg><Tri /></EyeButton>
        </FilterRow>
        <ScrollPane $mt={2} $gap={0}>
          <Details>
            <Category $h={24}><Open />Slot (Horizontal Box Slot)</Category>
            <DividedBlock $pb={1}>
              <PropRow h={23} name="Padding" id="padding" caret><Field $w={158} id="padding" defaultValue="20.0" /><ResetButton ml={4} /></PropRow>
              <PropRow h={21} name="Size" id="size" pin={false}>
                <SegPad><Seg>Auto</Seg><Seg $on>Fill</Seg></SegPad><Field $w={37} id="size" defaultValue="1.0" /><ResetButton ml={4} />
              </PropRow>
              <PropRow h={30} name="Horizontal Alignment"><SegPad><AlignButtons name="Horizontal" ids={["hl", "hc", "hr", "hf"]} /></SegPad></PropRow>
              <PropRow h={30} name="Vertical Alignment"><SegPad><AlignButtons name="Vertical" ids={["vt", "vc", "vb", "vf"]} /></SegPad></PropRow>
            </DividedBlock>
            <Category $h={26}><Open />Appearance</Category>
            <Props>
              <PropRow name="Value" id="value"><SpinField id="value" value="100.0" /><ResetButton /><Bind>Bind<Tri c="#111" w={7} /></Bind></PropRow>
              <PropRow name="Min Value" id="min"><SpinField id="min" value="0.0" /></PropRow>
              <PropRow name="Max Value" id="max"><SpinField id="max" value="100.0" /><ResetButton /></PropRow>
              <PropRow name="Orientation" id="orient" pin={false}>
                <SelectWrap $w={94} $h={18} $grad><select id="orient"><option>Horizontal</option></select><Tri c="#111" /></SelectWrap>
              </PropRow>
              <PropRow name="Slider Bar Color" caret><Swatch aria-label="Slider Bar Color" /></PropRow>
              <PropRow name="Slider Handle Color" caret><Swatch aria-label="Slider Handle Color" /></PropRow>
              <PropRow name="Step Size" id="step"><SpinField id="step" value="0.01" /></PropRow>
            </Props>
            <MoreBar aria-label="Show advanced"><Tri w={10} c="#ccc" /></MoreBar>
            <Category $h={26}><Open />Style</Category>
            <DividedBlock $pb={10}>
              <PropRow h={22} name="Style" caret pin={false}><ResetButton /></PropRow>
            </DividedBlock>
            <Category $h={25}><Open />Accessibility</Category>
          </Details>
          <Track $size={139} $at={1} />
        </ScrollPane>
      </Panel>
    </Side>
  );
}

export default function App() {
  return (
    <>
      <Global />
      <Window>
        <TitleBar>
          <Logo><UnrealLogo /></Logo>
          <DocTab><WidgetDoc />BP_AudioWidget<Close>×</Close></DocTab>
          <TitleRight>
            <Tutorial aria-label="Tutorials"><Svg w={14} h={13}><path d="M7 0L14 4 7 8 0 4Z" fill="#b8d0f0" /><path d="M3 6.500L7 9 11 6.500V10L7 12.500 3 10Z" fill="#7f9cd0" /><path d="M1.500 5V11" stroke="#d8b860" /></Svg></Tutorial>
            <WinButtons>
              <WinButton $w={25} aria-label="Minimize"><Svg w={10} h={9}><path d="M0 6H10V9H0Z" fill="#fff" /></Svg></WinButton>
              <WinButton $w={16} aria-label="Maximize"><Svg w={11} h={8}><path d="M1 1.500H10V7H1Z" stroke="#fff" strokeWidth="2" /></Svg></WinButton>
              <WinButton $w={36} aria-label="Close"><Svg w={9} h={9}><path d="M1 1L8 8M8 1L1 8" stroke="#fff" strokeWidth="2" /></Svg></WinButton>
            </WinButtons>
          </TitleRight>
        </TitleBar>
        <MenuBar>
          {["File", "Edit", "Asset", "View", "Debug", "Window", "Help"].map((m) => <MenuItem key={m}>{m}</MenuItem>)}
          <Parent>Parent class: <a href="#user-widget">User Widget</a></Parent>
        </MenuBar>
        <Toolbar>
          <Corner />
          <Tool $w={54}><CompileIcon />Compile</Tool>
          <Drop aria-label="Compile options"><Tri /></Drop>
          <Sep />
          <Tool $w={42}><SaveIcon />Save</Tool>
          <Tool $w={50}><BrowseIcon />Browse</Tool>
          <Sep />
          <Tool $w={86}><ReflectIcon />Widget Reflector</Tool>
          <Sep />
          <Tool $w={46}><PlayIcon />Play</Tool>
          <Drop aria-label="Play options"><Tri /></Drop>
          <DebugBox>
            <SelectWrap $h={20}><select id="debug"><option>No debug object selected</option></select><Tri c="#111" w={7} /></SelectWrap>
            <label htmlFor="debug">Debug Filter</label>
          </DebugBox>
          <Modes>
            <Mode $on><DesignerIcon />Designer</Mode>
            <Svg w={9} h={18}><path d="M1.500 1L7 9 1.500 17" stroke="#909090" strokeWidth="1.500" /></Svg>
            <Mode><GraphIcon />Graph</Mode>
          </Modes>
        </Toolbar>
        <Work><LeftSide /><Canvas /><DetailsPanel /></Work>
        <Footer>
          <PanelTab $ml={2} $h={18} icon={<AnimIcon />}>Animations</PanelTab>
          <Gap />
          <PanelTab $ml={2} $h={18} $dim icon={<TimelineIcon />}>Timeline</PanelTab>
          <PanelTab $ml={1} $h={18} icon={<CompilerIcon />}>Compiler Results</PanelTab>
        </Footer>
      </Window>
    </>
  );
}
